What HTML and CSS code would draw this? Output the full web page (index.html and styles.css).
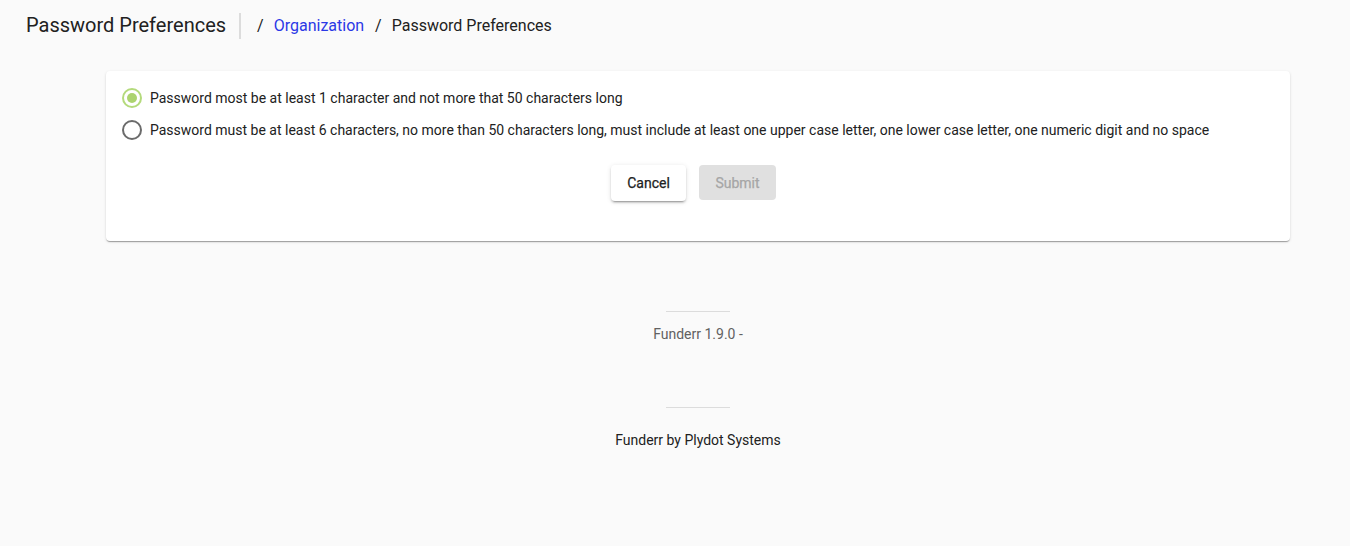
FILE: index.html
```html
<!DOCTYPE html>
<html lang="en">
<head>
<meta charset="utf-8">
<title>Password Preferences</title>
<link rel="stylesheet" href="styles.css">
</head>
<body>
<header class="topbar">
  <h1 class="title">Password Preferences</h1>
  <span class="vdivider"></span>
  <nav class="crumbs">
    <span class="sep">/</span>
    <a class="crumb-link" href="#">Organization</a>
    <span class="sep">/</span>
    <span class="crumb-current">Password Preferences</span>
  </nav>
</header>
<main class="content">
  <section class="card">
    <label class="option">
      <span class="radio checked"><span class="dot"></span></span>
      <span class="option-text">Password most be at least 1 character and not more that 50 characters long</span>
    </label>
    <label class="option">
      <span class="radio"></span>
      <span class="option-text">Password must be at least 6 characters, no more than 50 characters long, must include at least one upper case letter, one lower case letter, one numeric digit and no space</span>
    </label>
    <div class="actions">
      <button class="btn btn-raised" type="button">Cancel</button>
      <button class="btn btn-disabled" type="button" disabled>Submit</button>
    </div>
  </section>
  <footer class="footer">
    <div class="hline"></div>
    <div class="version">Funderr 1.9.0 -</div>
    <div class="hline second"></div>
    <div class="credit">Funderr by Plydot Systems</div>
  </footer>
</main>
</body>
</html>
```

FILE: styles.css
```css
* { box-sizing: border-box; }
html, body {
  margin: 0;
  padding: 0;
  background: #fafafa;
  font-family: Roboto, "Liberation Sans", Arial, sans-serif;
  color: #212121;
}
.topbar {
  display: flex;
  align-items: center;
  height: 50px;
  padding: 2px 0 0 26px;
}
.title {
  margin: 0;
  font-size: 20px;
  font-weight: 400;
  color: #212121;
  line-height: 24px;
  padding-bottom: 2px;
}
.vdivider {
  width: 2px;
  height: 26px;
  background: #dcdcdc;
  margin: 0 15px 0 13px;
}
.crumbs {
  display: flex;
  align-items: center;
  font-size: 16px;
  color: #212121;
  line-height: 20px;
}
.sep { margin: 0 10px 0 1px; }
.crumb-link {
  color: #2a38e6;
  text-decoration: none;
  margin-right: 10px;
}
.content {
  padding: 21px 60px 0 106px;
}
.card {
  background: #fff;
  border-radius: 4px;
  box-shadow: 0 2px 1px -1px rgba(0,0,0,.2), 0 1px 1px 0 rgba(0,0,0,.14), 0 1px 3px 0 rgba(0,0,0,.12);
  padding: 11px 16px 40px;
}
.option {
  display: flex;
  align-items: center;
  height: 32px;
  font-size: 14px;
  line-height: 20px;
  color: #212121;
}
.radio {
  width: 20px;
  height: 20px;
  border-radius: 50%;
  border: 2px solid #6b6b6b;
  display: flex;
  align-items: center;
  justify-content: center;
  margin-right: 8px;
  flex: none;
}
.radio.checked { border-color: #b4da7c; }
.dot {
  width: 10px;
  height: 10px;
  border-radius: 50%;
  background: #acd36f;
}
.actions {
  display: flex;
  justify-content: center;
  gap: 13px;
  margin-top: 19px;
  padding-right: 9px;
}
.btn {
  font-family: Roboto, "Liberation Sans", Arial, sans-serif;
  font-size: 14px;
  font-weight: 400;
  -webkit-text-stroke: 0.25px currentColor;
  height: 36px;
  min-width: 64px;
  padding: 0 16px;
  border: none;
  border-radius: 4px;
  line-height: 36px;
}
.btn-raised {
  background: #fff;
  color: #212121;
  width: 75px;
  box-shadow: 0 3px 1px -2px rgba(0,0,0,.2), 0 2px 2px 0 rgba(0,0,0,.14), 0 1px 5px 0 rgba(0,0,0,.12);
}
.btn-disabled {
  background: #e0e0e0;
  color: #a6a6a6;
  height: 35px;
  width: 77px;
}
.footer {
  display: flex;
  flex-direction: column;
  align-items: center;
  padding-top: 70px;
  font-size: 14px;
}
.hline {
  width: 64px;
  height: 1px;
  background: #dcdcdc;
}
.version {
  color: #616161;
  margin-top: 12px;
  line-height: 20px;
}
.hline.second { margin-top: 63px; }
.credit {
  color: #212121;
  margin-top: 22px;
  line-height: 20px;
}
```
